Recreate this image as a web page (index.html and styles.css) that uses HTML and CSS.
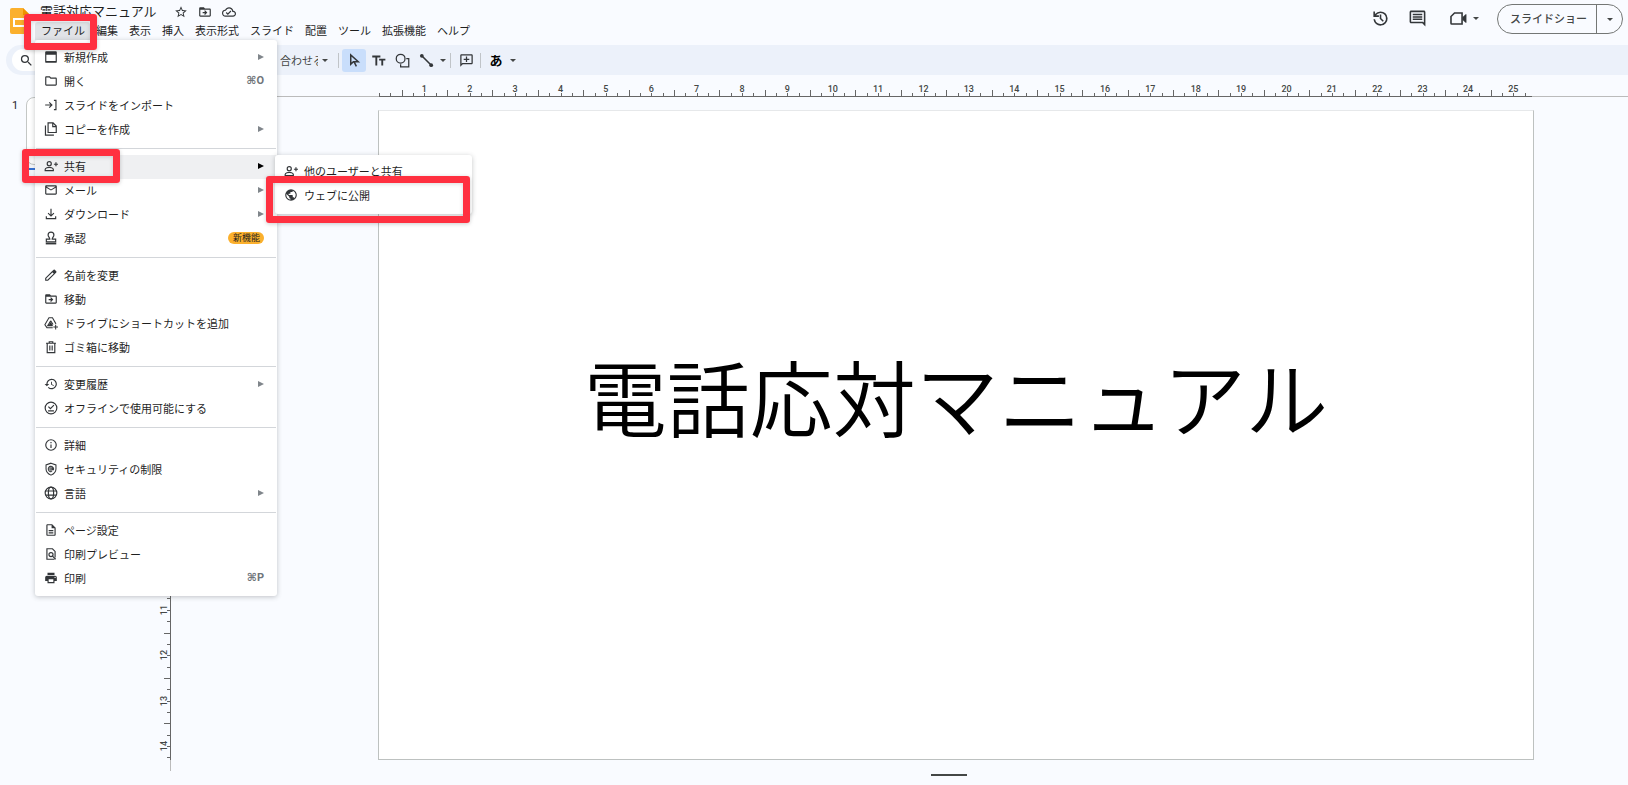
FILE: index.html
```html
<!DOCTYPE html>
<html lang="ja">
<head>
<meta charset="utf-8">
<title>電話対応マニュアル</title>
<link rel="stylesheet" href="styles.css">
</head>
<body>
<svg class="sprite" aria-hidden="true">
  <symbol id="star" viewBox="0 0 24 24"><path d="M22 9.24l-7.19-.62L12 2 9.19 8.63 2 9.24l5.46 4.73L5.82 21 12 17.27 18.18 21l-1.63-7.03L22 9.24zM12 15.4l-3.76 2.27 1-4.28-3.32-2.88 4.38-.38L12 6.1l1.71 4.04 4.38.38-3.32 2.88 1 4.28L12 15.4z"/></symbol>
  <symbol id="move" viewBox="0 0 24 24"><path d="M20 6h-8l-2-2H4c-1.1 0-2 .9-2 2v12c0 1.100.9 2 2 2h16c1.100 0 2-.9 2-2V8c0-1.100-.9-2-2-2zm0 12H4V8h16v10zm-8-1l4-4-4-4-1.400 1.400L12.200 12H8v2h4.200l-1.600 1.600L12 17z"/></symbol>
  <symbol id="cloud" viewBox="0 0 24 24"><path d="M19.350 10.040A7.490 7.490 0 0 0 12 4C9.110 4 6.600 5.640 5.350 8.040A5.994 5.994 0 0 0 0 14c0 3.310 2.690 6 6 6h13c2.760 0 5-2.240 5-5 0-2.640-2.050-4.780-4.650-4.960zM19 18H6c-2.210 0-4-1.790-4-4 0-2.050 1.530-3.760 3.560-3.970l1.070-.11.5-.95A5.469 5.469 0 0 1 12 6c2.620 0 4.880 1.860 5.390 4.430l.3 1.500 1.530.11A2.980 2.980 0 0 1 22 15c0 1.650-1.350 3-3 3zm-9-3.820l-2.090-2.090L6.500 13.500 10 17l6.010-6.010-1.410-1.410z"/></symbol>
  <symbol id="search" viewBox="0 0 24 24"><path d="M15.500 14h-.79l-.28-.27A6.470 6.470 0 0 0 16 9.500 6.500 6.500 0 1 0 9.500 16c1.610 0 3.090-.59 4.230-1.570l.27.28v.79l5 4.990L20.490 19l-4.990-5zm-6 0C7.010 14 5 11.990 5 9.500S7.010 5 9.500 5 14 7.010 14 9.500 11.990 14 9.500 14z"/></symbol>
  <symbol id="history" viewBox="0 0 24 24"><path d="M12 3a9 9 0 0 0-7 3.350V3H3v7h7V8H6.260A7 7 0 1 1 5.070 13H3.050A9 9 0 1 0 12 3zm-1 4v5.400l3.800 3.800 1.400-1.400-3.200-3.200V7z"/></symbol>
  <symbol id="comment" viewBox="0 0 24 24"><path d="M21.990 4c0-1.100-.89-2-1.990-2H4c-1.100 0-2 .9-2 2v12c0 1.100.9 2 2 2h14l4 4-.01-18zM20 4v13.170L18.830 16H4V4h16zM6 12h12v2H6zm0-3h12v2H6zm0-3h12v2H6z"/></symbol>
  <symbol id="video" viewBox="0 0 24 24"><path fill="none" stroke="currentColor" stroke-width="2" d="M7 5h9.500v14H3.500q-1 0-1-1V9.500z"/><path d="M17 10.500l4-4h1v11h-1l-4-4z"/></symbol>
  <symbol id="cursor" viewBox="0 0 24 24"><path fill="none" stroke="currentColor" stroke-width="2.400" d="M6 3v15l4.200-4.200H18zM11 13.500l4 8"/></symbol>
  <symbol id="text" viewBox="0 0 24 24"><path d="M2 4v3h5v13h3V7h5V4zm11 5v3h3.500v8h3v-8H23V9z"/></symbol>
  <symbol id="shape" viewBox="0 0 24 24"><g fill="none" stroke="currentColor" stroke-width="2"><circle cx="9" cy="9" r="7"/><path d="M18 9h4v13H9v-4"/></g></symbol>
  <symbol id="line" viewBox="0 0 24 24"><path fill="none" stroke="currentColor" stroke-width="2.500" d="M4 4l16 16"/><circle cx="4.500" cy="4.500" r="3"/><circle cx="19.500" cy="19.500" r="3"/></symbol>
  <symbol id="addcomment" viewBox="0 0 24 24"><path d="M2 22V4c0-1.100.9-2 2-2h16c1.100 0 2 .9 2 2v12c0 1.100-.9 2-2 2H6zM4 17.200L5.200 16H20V4H4zM11 5.500h2V9h3.500v2H13v3.500h-2V11H7.500V9H11z"/></symbol>
  <symbol id="new" viewBox="0 0 24 24"><path d="M4 2h16a2 2 0 0 1 2 2v16a2 2 0 0 1-2 2H4a2 2 0 0 1-2-2V4a2 2 0 0 1 2-2zm0 6v11h16V8z"/></symbol>
  <symbol id="folder" viewBox="0 0 24 24"><path d="M9.170 6l2 2H20v10H4V6h5.170M10 4H4c-1.100 0-2 .9-2 2v12c0 1.100.9 2 2 2h16c1.100 0 2-.9 2-2V8c0-1.100-.9-2-2-2h-8l-2-2z"/></symbol>
  <symbol id="import" viewBox="0 0 24 24"><path fill="none" stroke="currentColor" stroke-width="2" d="M2 12h11M9 7.500l4.500 4.500L9 16.500M17 4h3.500v16H17"/></symbol>
  <symbol id="copy" viewBox="0 0 24 24"><path fill="none" stroke="currentColor" stroke-width="2" d="M7 1.500h8.500L21 7v11H7zM15 2v6h6M2.500 6v16.500H17"/></symbol>
  <symbol id="share" viewBox="0 0 24 24"><g fill="none" stroke="currentColor" stroke-width="2"><circle cx="9" cy="8" r="3.500"/><path d="M2 20v-2q0-2 3-3 4-1.400 8 0 3 1 3 3v2zM17 9h7M20.500 5.500v7"/></g></symbol>
  <symbol id="mail" viewBox="0 0 24 24"><path d="M22 6c0-1.100-.9-2-2-2H4c-1.100 0-2 .9-2 2v12c0 1.100.9 2 2 2h16c1.100 0 2-.9 2-2V6zm-2 0l-8 5-8-5h16zm0 12H4V8l8 5 8-5v10z"/></symbol>
  <symbol id="download" viewBox="0 0 24 24"><path fill="none" stroke="currentColor" stroke-width="2" d="M12 3v12M7 10.500l5 5 5-5M4 16v4h16v-4"/></symbol>
  <symbol id="stamp" viewBox="0 0 24 24"><path fill="none" stroke="currentColor" stroke-width="2" d="M10 14c0-3-3-4-3-7a5 5 0 0 1 10 0c0 3-3 4-3 7h6v4.500H4V14z"/><path d="M3 20h18v3H3z"/></symbol>
  <symbol id="pencil" viewBox="0 0 24 24"><path fill="none" stroke="currentColor" stroke-width="2" d="M3 21v-3.500L14.500 6l3.500 3.500L6.500 21z"/><path d="M14 5.500l2.500-2.500q1-.8 2 0l2.500 2.500q.8 1 0 2L18.500 10z"/></symbol>
  <symbol id="drive" viewBox="0 0 24 24"><path fill="none" stroke="currentColor" stroke-width="1.800" d="M15 20H5l-3.500-5L8.500 3h6l6 10.500M11.500 8l-5.200 8.500H15M11.500 8l4 6.500M11.500 12l-1.500 2.500h3zM20 15v8M16 19h8"/></symbol>
  <symbol id="trash" viewBox="0 0 24 24"><path fill="none" stroke="currentColor" stroke-width="2" d="M3.500 5.500h17M9 5V3h6v2M5.500 6v15.500h13V6M10 9.500V18M14 9.500V18"/></symbol>
  <symbol id="versions" viewBox="0 0 24 24"><path d="M13 3a9 9 0 0 0-9 9H1l3.890 3.890.07.14L9 12H6a7 7 0 1 1 2.060 4.940l-1.420 1.420A9 9 0 1 0 13 3zm-1 5v5l4.280 2.540.72-1.210-3.500-2.080V8z"/></symbol>
  <symbol id="offline" viewBox="0 0 24 24"><g fill="none" stroke="currentColor" stroke-width="2"><circle cx="12" cy="12" r="10"/><path d="M7.500 9.500l3.500 3.500 6-6M7 17h10"/></g></symbol>
  <symbol id="info" viewBox="0 0 24 24"><path d="M11 7h2v2h-2zm0 4h2v6h-2zm1-9a10 10 0 1 0 0 20 10 10 0 0 0 0-20zm0 18a8 8 0 1 1 0-16 8 8 0 0 1 0 16z"/></symbol>
  <symbol id="shield" viewBox="0 0 24 24"><g fill="none" stroke="currentColor" stroke-width="1.800"><path d="M12 2l8.500 3v7q0 7-8.500 10.500Q3.500 19 3.500 12V5z"/><circle cx="12" cy="12" r="2"/><path d="M14.200 9.500V13q2.300 1.500 2.300-1.500a4.600 4.600 0 1 0-2.500 4.600"/></g></symbol>
  <symbol id="globe" viewBox="0 0 24 24"><g fill="none" stroke="currentColor" stroke-width="2"><circle cx="12" cy="12" r="10"/><ellipse cx="12" cy="12" rx="4.500" ry="10"/><path d="M3 8.500h18M3 15.500h18"/></g></symbol>
  <symbol id="doc" viewBox="0 0 24 24"><path d="M8 16h8v2H8zm0-4h8v2H8zm6-10H6c-1.100 0-2 .9-2 2v16c0 1.100.89 2 1.990 2H18c1.100 0 2-.9 2-2V8l-6-6zm4 18H6V4h7v5h5v11z"/></symbol>
  <symbol id="preview" viewBox="0 0 24 24"><path fill="none" stroke="currentColor" stroke-width="2" d="M19 18V7.500L14.500 3H5v18h13"/><g fill="none" stroke="currentColor" stroke-width="2"><circle cx="12" cy="13" r="3.500"/><path d="M14.500 15.500L20 21"/></g></symbol>
  <symbol id="print" viewBox="0 0 24 24"><path d="M19 8H5c-1.660 0-3 1.340-3 3v6h4v4h12v-4h4v-6c0-1.660-1.340-3-3-3zm-3 11H8v-5h8v5zm3-7a1 1 0 1 1 0-2 1 1 0 0 1 0 2zM18 3H6v4h12V3z"/></symbol>
  <symbol id="public" viewBox="0 0 24 24"><path d="M12 2a10 10 0 1 0 0 20 10 10 0 0 0 0-20zm-1 17.930A7.990 7.990 0 0 1 4.210 10.210L9 15v1a2 2 0 0 0 2 2v1.930zm6.900-2.540A1.990 1.990 0 0 0 16 16h-1v-3a1 1 0 0 0-1-1H8v-2h2a1 1 0 0 0 1-1V7h2a2 2 0 0 0 2-2v-.41a7.990 7.990 0 0 1 2.900 12.800z"/></symbol>
</svg>

<header class="header">
  <svg class="logo" viewBox="0 0 20 26" aria-hidden="true"><path fill="#fbb02d" d="M2 0h11l7 7v17a2 2 0 0 1-2 2H2a2 2 0 0 1-2-2V2a2 2 0 0 1 2-2z"/><path fill="#f09300" d="M13 0l7 7h-7z"/><path fill="none" stroke="#fff" stroke-width="2" d="M4 11h12v7H4z"/></svg>
  <div class="titles">
    <div class="title-row">
      <h1 class="doc-title">電話対応マニュアル</h1>
      <button class="icon-btn" aria-label="スター"><svg class="icon"><use href="#star"/></svg></button>
      <button class="icon-btn" aria-label="移動"><svg class="icon"><use href="#move"/></svg></button>
      <button class="icon-btn" aria-label="保存状況"><svg class="icon"><use href="#cloud"/></svg></button>
    </div>
    <nav class="menubar">
      <button class="menu-btn open">ファイル</button>
      <button class="menu-btn">編集</button>
      <button class="menu-btn">表示</button>
      <button class="menu-btn">挿入</button>
      <button class="menu-btn">表示形式</button>
      <button class="menu-btn">スライド</button>
      <button class="menu-btn">配置</button>
      <button class="menu-btn">ツール</button>
      <button class="menu-btn">拡張機能</button>
      <button class="menu-btn">ヘルプ</button>
      <div class="menu file-menu" role="menu">
        <button class="item"><svg class="icon"><use href="#new"/></svg>新規作成<span class="arrow"></span></button>
        <button class="item"><svg class="icon"><use href="#folder"/></svg>開く<kbd class="keys">⌘O</kbd></button>
        <button class="item"><svg class="icon"><use href="#import"/></svg>スライドをインポート</button>
        <button class="item"><svg class="icon"><use href="#copy"/></svg>コピーを作成<span class="arrow"></span></button>
        <hr class="rule">
        <div class="item-wrap">
          <button class="item active"><svg class="icon"><use href="#share"/></svg>共有<span class="arrow"></span></button>
          <div class="menu submenu" role="menu">
            <button class="item"><svg class="icon"><use href="#share"/></svg>他のユーザーと共有</button>
            <button class="item"><svg class="icon"><use href="#public"/></svg>ウェブに公開</button>
          </div>
        </div>
        <button class="item"><svg class="icon"><use href="#mail"/></svg>メール<span class="arrow"></span></button>
        <button class="item"><svg class="icon"><use href="#download"/></svg>ダウンロード<span class="arrow"></span></button>
        <button class="item"><svg class="icon"><use href="#stamp"/></svg>承認<span class="badge">新機能</span></button>
        <hr class="rule">
        <button class="item"><svg class="icon"><use href="#pencil"/></svg>名前を変更</button>
        <button class="item"><svg class="icon"><use href="#move"/></svg>移動</button>
        <button class="item"><svg class="icon"><use href="#drive"/></svg>ドライブにショートカットを追加</button>
        <button class="item"><svg class="icon"><use href="#trash"/></svg>ゴミ箱に移動</button>
        <hr class="rule">
        <button class="item"><svg class="icon"><use href="#versions"/></svg>変更履歴<span class="arrow"></span></button>
        <button class="item"><svg class="icon"><use href="#offline"/></svg>オフラインで使用可能にする</button>
        <hr class="rule">
        <button class="item"><svg class="icon"><use href="#info"/></svg>詳細</button>
        <button class="item"><svg class="icon"><use href="#shield"/></svg>セキュリティの制限</button>
        <button class="item"><svg class="icon"><use href="#globe"/></svg>言語<span class="arrow"></span></button>
        <hr class="rule">
        <button class="item"><svg class="icon"><use href="#doc"/></svg>ページ設定</button>
        <button class="item"><svg class="icon"><use href="#preview"/></svg>印刷プレビュー</button>
        <button class="item"><svg class="icon"><use href="#print"/></svg>印刷<kbd class="keys">⌘P</kbd></button>
      </div>
    </nav>
  </div>
  <div class="actions">
    <button class="icon-btn" aria-label="変更履歴"><svg class="icon large"><use href="#history"/></svg></button>
    <button class="icon-btn" aria-label="コメント"><svg class="icon large"><use href="#comment"/></svg></button>
    <button class="icon-btn meet" aria-label="通話"><svg class="icon large"><use href="#video"/></svg><span class="caret"></span></button>
    <div class="present">
      <button class="present-main">スライドショー</button>
      <button class="present-more" aria-label="その他"><span class="caret"></span></button>
    </div>
  </div>
</header>

<div class="toolbar">
  <button class="search" aria-label="メニューを検索"><svg class="icon mid"><use href="#search"/></svg></button>
  <button class="zoom"><span class="zoom-text">合わせる</span><span class="caret"></span></button>
  <span class="sep"></span>
  <button class="tool selected" aria-label="選択"><svg class="icon mid"><use href="#cursor"/></svg></button>
  <button class="tool" aria-label="テキスト"><svg class="icon mid"><use href="#text"/></svg></button>
  <button class="tool" aria-label="図形"><svg class="icon mid"><use href="#shape"/></svg></button>
  <button class="tool" aria-label="線"><svg class="icon mid"><use href="#line"/></svg></button>
  <span class="caret"></span>
  <span class="sep"></span>
  <button class="tool" aria-label="コメントを追加"><svg class="icon mid"><use href="#addcomment"/></svg></button>
  <span class="sep"></span>
  <button class="tool ime">あ</button>
  <span class="caret"></span>
</div>

<main class="workspace">
  <aside class="filmstrip">
    <span class="slide-no">1</span>
    <div class="thumb"></div>
  </aside>
  <section class="editor">
    <div class="hruler"><div class="scale" data-length="25.4"></div></div>
    <div class="stage">
      <div class="vruler"><div class="scale vertical" data-length="14.3"></div></div>
      <div class="canvas"><div class="slide"><p class="slide-title">電話応対マニュアル</p></div></div>
    </div>
    <div class="notes-handle"></div>
  </section>
</main>

<div class="mark mark-file"></div>
<div class="mark mark-share"></div>
<div class="mark mark-publish"></div>
<script src="script.js"></script>
</body>
</html>
```
FILE: styles.css
```css
* { box-sizing: border-box; }

body {
  margin: 0;
  position: relative;
  min-height: 100vh;
  overflow: hidden;
  background: #f9fbff;
  color: #1f1f1f;
  font-family: "Noto Sans CJK JP", sans-serif;
  font-size: 11px;
  line-height: 16px;
}

button {
  margin: 0;
  padding: 0;
  border: 0;
  background: none;
  color: inherit;
  font: inherit;
  display: flex;
  align-items: center;
}

.sprite { position: absolute; width: 0; height: 0; }
.icon { width: 14px; height: 14px; flex: none; fill: currentColor; color: #333639; }
.icon.mid { width: 15px; height: 15px; }
.icon.large { width: 19px; height: 19px; }

.caret {
  flex: none;
  border: 3px solid transparent;
  border-top-color: #444746;
  border-bottom: 0;
}

/* Header */
.header { display: flex; height: 45px; padding-left: 10px; }
.logo { width: 20px; height: 26px; margin-top: 8px; }
.titles { padding-top: 2px; }
.title-row { display: flex; align-items: center; height: 20px; gap: 10px; padding-left: 10px; }
.doc-title { margin: 0 7px 0 0; font-size: 13px; line-height: 18px; height: 20px; font-weight: 400; }
.menubar { position: relative; display: flex; gap: 1px; margin-left: 5px; }
.menu-btn { height: 18px; padding: 0 5px 2px; white-space: nowrap; }
.menu-btn.open { background: #e1e3e7; padding-left: 6px; border-radius: 3px 3px 0 0; }

.actions { display: flex; align-items: flex-start; margin-left: auto; padding: 4px 5px 0 0; gap: 18px; }
.icon-btn { height: 29px; }
.title-row .icon-btn { height: 22px; }
.meet { gap: 5px; margin-left: 4px; }
.present {
  display: flex;
  height: 30px;
  border: 1px solid #747775;
  border-radius: 15px;
}
.present-main { padding: 0 9px 2px 12px; font-weight: 500; color: #444746; border-right: 1px solid #747775; }
.present-more { width: 25px; justify-content: center; }

/* Toolbar */
.toolbar {
  display: flex;
  align-items: center;
  height: 30px;
  margin-left: 6px;
  background: #ecf1fa;
  border-radius: 15px 0 0 15px;
}
.search { width: 240px; height: 22px; margin-left: 6px; padding-left: 7px; border-radius: 11px; background: #fff; }
.zoom { margin-left: 28px; gap: 4px; color: #444746; }
.zoom-text { width: 38px; overflow: hidden; white-space: nowrap; text-align: left; }
.sep { width: 1px; height: 15px; margin: 0 3px 0 2px; background: #c0c4c8; }
.tool { width: 24px; height: 23px; justify-content: center; border-radius: 3px; }
.tool + .caret { margin-left: 2px; }
.caret + .sep { margin-left: 4px; }
.zoom + .sep { margin-left: 10px; }
.tool.selected { background: #c9defb; }
.tool.ime { font-size: 13px; font-weight: 700; color: #000; }

/* Menus */
.menu {
  position: absolute;
  padding: 6px 0;
  border-radius: 3px;
  background: #fff;
  box-shadow: 0 1px 5px rgba(60, 64, 67, .3);
}
.file-menu { z-index: 2; top: 18px; left: 0; width: 242px; padding-bottom: 5px; }
.submenu { top: 0; left: 240px; width: 197px; padding-top: 5px; }
.item { width: 100%; height: 24px; padding: 0 13px 2px 9px; gap: 6px; white-space: nowrap; }
.item-wrap { position: relative; }
.item.active { background: #eff0f2; }
.rule { height: 1px; margin: 6px 1px; border: 0; background: #d3d6da; }
.arrow {
  margin-left: auto;
  border: 3px solid transparent;
  border-left: 6px solid #80868b;
  border-right: 0;
}
.item.active .arrow { border-left-color: #000; }
.keys { margin-left: auto; color: #70757a; font-family: Roboto, "DejaVu Sans", sans-serif; font-size: 11px; font-weight: 700; }
.badge {
  margin-left: auto;
  padding: 0 4px 0 5px;
  border-radius: 6px;
  background: #fbb02d;
  font-size: 9px;
  line-height: 12px;
}

/* Workspace */
.workspace { display: flex; }
.filmstrip { display: flex; align-items: flex-start; width: 160px; padding: 22px 0 0 12px; }
.slide-no { width: 14px; font-family: Roboto, sans-serif; line-height: 18px; }
.thumb { position: relative; flex: 1; height: 68px; background: #fff; border: 1px solid #c4c7c5; border-radius: 8px; }
.thumb::after { content: ""; position: absolute; left: 2px; right: 8px; top: 70px; height: 2px; background: #3571d6; }
.editor { flex: 1; display: flex; flex-direction: column; }
.hruler { height: 22px; padding: 0 96px 0 219px; border-bottom: 1px solid #bbb; }
.stage { display: flex; }
.vruler { width: 11px; padding: 13px 0 11px; border-right: 1px solid #bbb; }
.canvas { flex: 1; padding: 13px 94px 11px 207px; }
.slide {
  display: flex;
  align-items: center;
  justify-content: center;
  aspect-ratio: 16 / 9;
  background: #fff;
  border: 1px solid #bdc1c0;
  border-top-color: #e6e8ea;
  padding-bottom: 80px;
}
.slide-title { margin: 0; color: #000; font-size: 83px; font-weight: 350; line-height: 120px; white-space: nowrap; }
.notes-handle { width: 36px; height: 2px; margin: 3px 0 0 calc(50% + 37px); background: #444746; }

/* Rulers */
.scale {
  display: flex;
  align-items: flex-end;
  height: 22px;
  border-bottom: 1px solid #666;
  color: #444746;
  font: 500 9px/10px Roboto, sans-serif;
}
.tick { position: relative; flex: 1 1 0; min-width: 0; height: 3px; border-left: 1px solid #666; }
.tick.half { height: 6px; }
.tick-label { position: absolute; left: -11px; bottom: 2px; width: 20px; text-align: center; }
.scale.vertical {
  flex-direction: column;
  height: 100%;
  width: 11px;
  border-bottom: 0;
  border-right: 1px solid #666;
}
.vertical .tick { width: 3px; height: auto; min-height: 0; border-left: 0; border-top: 1px solid #666; }
.vertical .tick.half { width: 6px; }
.vertical .tick-label { left: auto; right: -4px; bottom: auto; top: -6px; transform: rotate(-90deg); }

/* Highlight frames */
.mark {
  position: absolute;
  z-index: 3;
  border: 7px solid #ff3040;
  border-radius: 3px;
  box-shadow: 0 1px 4px rgba(0, 0, 0, .2), inset 0 1px 4px rgba(0, 0, 0, .15);
}
.mark-file { left: 24px; top: 14px; width: 73px; height: 36px; }
.mark-share { left: 22px; top: 149px; width: 98px; height: 34px; }
.mark-publish { left: 266px; top: 176px; width: 204px; height: 47px; }
```
FILE: script.js
```js
// Fills each ruler with quarter-centimetre ticks and whole-centimetre numbers.
document.querySelectorAll('.scale').forEach(function (scale) {
  var quarters = Number(scale.dataset.length) * 4;
  for (var i = 0; i < quarters; i++) {
    var tick = document.createElement('span');
    tick.className = i % 4 === 2 ? 'tick half' : 'tick';
    tick.style.flexGrow = Math.min(1, quarters - i);
    if (i > 0 && i % 4 === 0) {
      var label = document.createElement('span');
      label.className = 'tick-label';
      label.textContent = i / 4;
      tick.appendChild(label);
    }
    scale.appendChild(tick);
  }
});
```
